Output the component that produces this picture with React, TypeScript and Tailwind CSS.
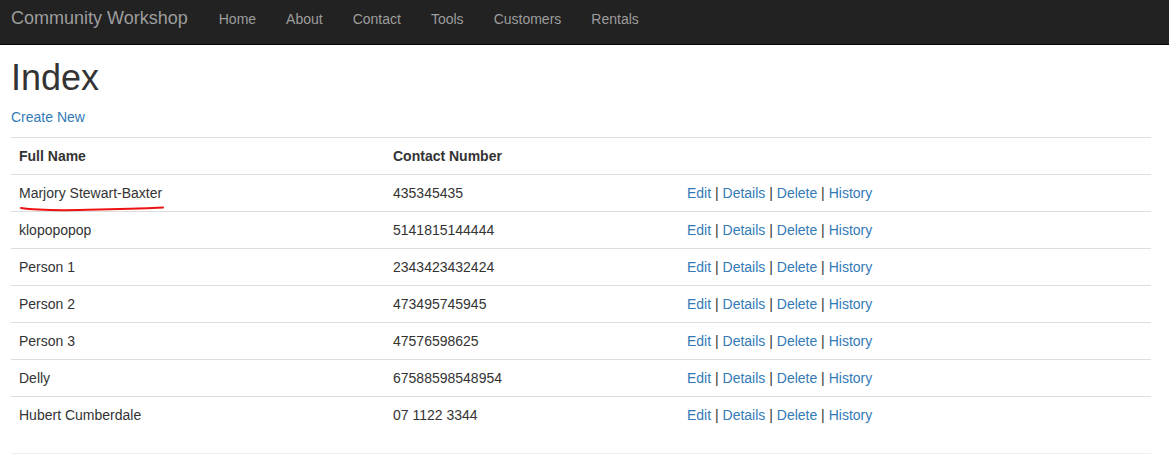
const navItems = ["Home", "About", "Contact", "Tools", "Customers", "Rentals"];

const people = [
  { name: "Marjory Stewart-Baxter", phone: "435345435", marked: true },
  { name: "klopopopop", phone: "5141815144444" },
  { name: "Person 1", phone: "2343423432424" },
  { name: "Person 2", phone: "473495745945" },
  { name: "Person 3", phone: "47576598625" },
  { name: "Delly", phone: "67588598548954" },
  { name: "Hubert Cumberdale", phone: "07 1122 3344" },
];

const actions = ["Edit", "Details", "Delete", "History"];

const Navbar = () => (
  <nav className="h-[45px] bg-[#222222] border-b border-[#080808]">
    <div className="flex items-start px-[11px] pt-[8px]">
      <a href="#" className="text-[18px] leading-[20px] text-[#9d9d9d] mr-[16px]">
        Community Workshop
      </a>
      <ul className="flex pt-[1px]">
        {navItems.map((item) => (
          <li key={item}>
            <a href="#" className="block px-[15px] text-[14px] leading-[20px] text-[#9d9d9d]">
              {item}
            </a>
          </li>
        ))}
      </ul>
    </div>
  </nav>
);

export default function App() {
  return (
    <div className="min-h-screen bg-white text-[14px] leading-[20px] text-[#333333] font-['Liberation_Sans',Arial,sans-serif]">
      <Navbar />

      <div className="px-[11px] w-[1162px]">
        <h1 className="text-[36px] leading-[1.1] mt-[13px] mb-[9px] font-normal">Index</h1>
        <p className="mb-[10px]">
          <a href="#" className="text-[#337ab7]">Create New</a>
        </p>

        <table className="w-[1140px] table-fixed border-collapse">
          <colgroup>
            <col className="w-[374px]" />
            <col className="w-[294px]" />
            <col />
          </colgroup>
          <tbody>
            <tr>
              <th className="text-left font-bold p-[8px] border-t border-[#dddddd]">Full Name</th>
              <th className="text-left font-bold p-[8px] border-t border-[#dddddd]">Contact Number</th>
              <th className="p-[8px] border-t border-[#dddddd]"></th>
            </tr>
            {people.map((p) => (
              <tr key={p.name}>
                <td className="p-[8px] border-t border-[#dddddd] relative">
                  {p.name}
                  {p.marked && (
                    <svg
                      className="absolute left-[8px] top-[30px] pointer-events-none"
                      width="150"
                      height="8"
                      viewBox="0 0 150 8"
                    >
                      <path
                        d="M2 3 C 15 5, 35 5.4, 60 5 S 110 4.4, 144 2.6"
                        fill="none"
                        stroke="#ee1111"
                        strokeWidth="2"
                        strokeLinecap="round"
                      />
                    </svg>
                  )}
                </td>
                <td className="p-[8px] border-t border-[#dddddd]">{p.phone}</td>
                <td className="p-[8px] border-t border-[#dddddd]">
                  {actions.map((a, i) => (
                    <span key={a}>
                      {i > 0 && " | "}
                      <a href="#" className="text-[#337ab7]">{a}</a>
                    </span>
                  ))}
                </td>
              </tr>
            ))}
          </tbody>
        </table>

        <hr className="mt-[20px] w-[1140px] border-0 border-t border-[#eeeeee]" />
      </div>
    </div>
  );
}
